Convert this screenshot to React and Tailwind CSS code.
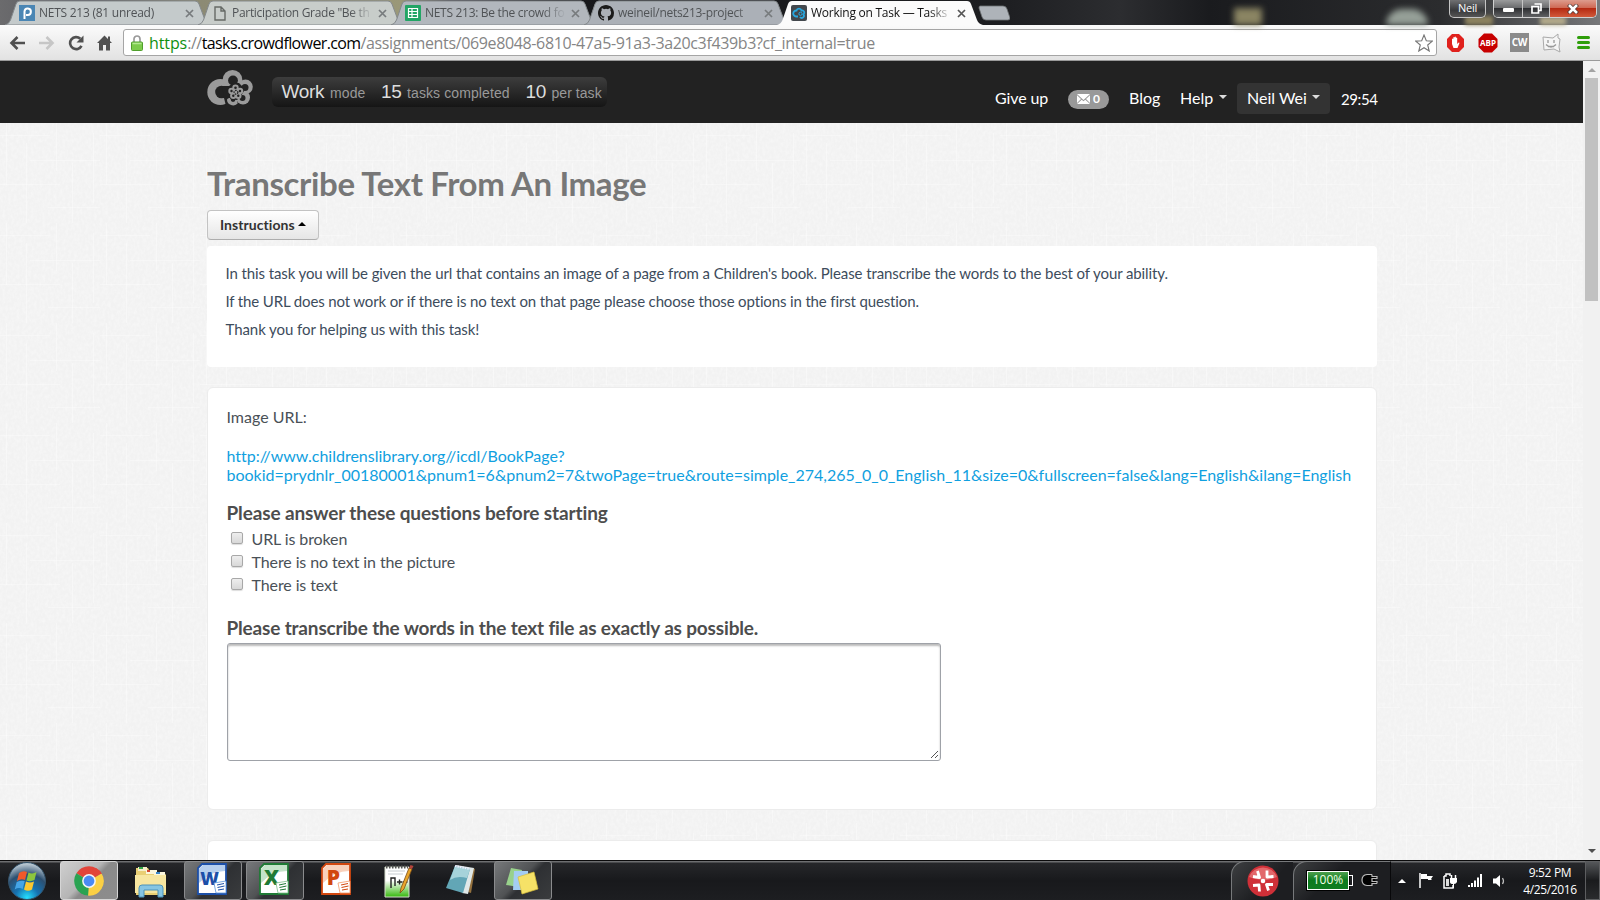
import React from "react";

const ui = "font-['Open_Sans','Noto_Sans',sans-serif]";

function Close({ active }) {
  return (
    <svg width="9" height="9" viewBox="0 0 9 9" className="shrink-0">
      <path d="M1 1l7 7M8 1l-7 7" stroke={active ? "#555" : "#777b7d"} strokeWidth="1.7" />
    </svg>
  );
}

function Tab({ icon, title, fill, active, titleClass }) {
  return (
    <div className="relative h-[25px] w-[193px] shrink-0">
      <svg width="206" height="25" viewBox="0 0 206 25" className="absolute left-0 top-0">
        <path
          d="M0 25 Q4 24 5.5 20 L11 4 Q12 1 15 1 H190 Q193 1 194 4 L200 20 Q201.500 24 206 25Z"
          fill={fill}
          stroke={active ? "none" : "#84898c"}
          strokeWidth="1"
        />
      </svg>
      <div className="relative flex h-[25px] items-center pl-[14px] pt-[1px]">
        <span className="flex w-[16px] shrink-0 justify-center">{icon}</span>
        <span
          className={`ml-[4px] w-[141px] shrink-0 whitespace-nowrap text-[12px] leading-[18px] [mask-image:linear-gradient(to_right,#000_118px,transparent_141px)] ${titleClass} ${active ? "text-[#111]" : "text-[#505356]"}`}
        >
          {title}
        </span>
        <span className="ml-[5px] flex">
          <Close active={active} />
        </span>
      </div>
    </div>
  );
}

const tabIcons = {
  piazza: (
    <svg width="16" height="16" viewBox="0 0 16 16">
      <rect width="16" height="16" fill="#4a86b4" />
      <path d="M5.500 14V6.500A3.200 3.200 0 1 1 8.500 10H7" fill="none" stroke="#fff" strokeWidth="2" />
    </svg>
  ),
  page: (
    <svg width="12" height="15" viewBox="0 0 12 15">
      <path d="M1 1h6l4 4v9H1zM7 1v4h4" fill="none" stroke="#666a66" strokeWidth="1.400" />
    </svg>
  ),
  sheet: (
    <svg width="16" height="16" viewBox="0 0 16 16">
      <rect width="16" height="16" rx="1" fill="#22a565" />
      <path d="M3.500 3.500h9v9h-9zM3.500 6.500h9M3.500 9.500h9M7 3.500v9" fill="none" stroke="#fff" strokeWidth="1.200" />
    </svg>
  ),
  github: (
    <svg width="16" height="16" viewBox="0 0 16 16">
      <path
        fill="#1b1b1b"
        d="M8 0C3.580 0 0 3.580 0 8c0 3.540 2.290 6.530 5.470 7.590.4.070.55-.170.55-.380v-1.490c-2.230.480-2.700-.95-2.700-.95-.36-.92-.89-1.170-.89-1.170-.73-.5.050-.49.050-.49.810.060 1.230.83 1.230.83.720 1.230 1.880.87 2.340.67.070-.52.280-.87.510-1.070-1.780-.2-3.640-.89-3.640-3.950 0-.87.310-1.590.820-2.150-.080-.2-.36-1.020.080-2.120 0 0 .67-.21 2.200.82a7.700 7.700 0 0 1 4 0c1.530-1.040 2.200-.82 2.200-.82.440 1.100.16 1.920.080 2.120.51.560.82 1.270.82 2.150 0 3.070-1.870 3.750-3.650 3.950.29.250.54.730.54 1.480v2.200c0 .21.150.46.550.38A8 8 0 0 0 16 8c0-4.420-3.580-8-8-8z"
      />
    </svg>
  ),
  flower: (
    <svg width="16" height="16" viewBox="0 0 16 16">
      <rect width="16" height="16" rx="2" fill="#43484d" />
      <path d="M7 11.500H5a3 3 0 1 1 .5-6 2.600 2.600 0 0 1 5 0 2.300 2.300 0 0 1 2 4 2 2 0 0 1-3.500 2.500" fill="none" stroke="#28a8e0" strokeWidth="1.800" />
      <circle cx="9.500" cy="8.800" r="1.600" fill="none" stroke="#28a8e0" strokeWidth="1" />
    </svg>
  ),
};

function TabStrip() {
  return (
    <div className="relative flex h-[25px] bg-[linear-gradient(90deg,#6b6b6d_0,#55555c_90px,#8c8a74_200px,#9a9878_400px,#4b4b52_450px,#17181b_560px,#1d1e21_1000px,#2c2d30_1120px,#1a1b1e_1210px,#2b2c2e_1440px,#77787a_1600px)] pl-[5px]">
      <div className="absolute left-[1234px] top-[8px] h-[17px] w-[28px] bg-[#8b8563] blur-[3px]" />
      <div className="absolute left-[1386px] top-[9px] h-[16px] w-[42px] rounded-t-full bg-[#96a098] blur-[3px]" />
      <div className="absolute left-[1465px] top-[16px] h-[9px] w-[28px] bg-[#8d835f] blur-[2px]" />
      <div className="absolute left-[1540px] top-[17px] h-[8px] w-[26px] bg-[#b4ab8b] blur-[2px]" />
      <Tab fill="#c4cacb" icon={tabIcons.piazza} title="NETS 213 (81 unread)" titleClass="tracking-[-0.25px]" />
      <Tab fill="#c8cdca" icon={tabIcons.page} title={'Participation Grade "Be th'} titleClass="tracking-[-0.3px]" />
      <Tab fill="#b2b7bd" icon={tabIcons.sheet} title="NETS 213: Be the crowd fo" titleClass="tracking-[-0.3px]" />
      <Tab fill="#abb0b7" icon={tabIcons.github} title="weineil/nets213-project" titleClass="tracking-[-0.28px]" />
      <Tab fill="#fbfbfb" active icon={tabIcons.flower} title="Working on Task — Tasks" titleClass="tracking-[-0.25px]" />
      <svg width="32" height="16" viewBox="0 0 32 16" className="ml-[8px] mt-[5px] shrink-0">
        <path d="M2 1h23q3 0 4 3l3 9q0 2-2 2H8q-3 0-4-3L1 3q0-2 1-2z" fill="#aeb3b9" stroke="#6d7174" strokeWidth=".8" />
      </svg>
      <div className="flex-1" />
      <div className="relative mr-[3px] flex h-[19px] items-start">
        <div className={`mr-[7px] flex h-[18px] w-[37px] items-center justify-center rounded-b-[5px] border border-t-0 border-[#c5c5c5] bg-[linear-gradient(#6f7072,#38393b_60%,#555)] text-[11px] tracking-[-0.2px] text-white ${ui}`}>Neil</div>
        <div className="flex h-[18px] w-[104px] overflow-hidden rounded-b-[5px] border border-t-0 border-[#d0d0d0]">
          <div className="flex w-[29px] items-center justify-center border-r border-[#c5c5c5] bg-[linear-gradient(#9a9b9c,#6b6c6e_45%,#2d2e31_50%,#606163)]">
            <div className="mt-[3px] h-[4px] w-[11px] rounded-[1px] bg-white" />
          </div>
          <div className="flex w-[27px] items-center justify-center border-r border-[#c5c5c5] bg-[linear-gradient(#9a9b9c,#6b6c6e_45%,#2d2e31_50%,#606163)]">
            <svg width="11" height="11" viewBox="0 0 11 11">
              <path d="M3.500 1h6.500v6.500H8M1 3.500h6.500V10H1z" fill="none" stroke="#fff" strokeWidth="1.700" />
            </svg>
          </div>
          <div className="flex flex-1 items-center justify-center bg-[linear-gradient(#dd9c8d,#cf6a55_45%,#b52a12_50%,#d2593a)]">
            <svg width="12" height="10" viewBox="0 0 12 10">
              <path d="M1.500 .500l9 9M10.500 .500l-9 9" stroke="#4a3230" strokeWidth="4" />
              <path d="M2 1l8 8M10 1l-8 8" stroke="#fff" strokeWidth="2.600" />
            </svg>
          </div>
        </div>
      </div>
    </div>
  );
}

function Toolbar() {
  return (
    <div className="flex h-[36px] items-center border-b border-[#9a9a9a] bg-[linear-gradient(#fbfbfb,#e2e2e2)]">
      <div className="flex w-[123px] items-center gap-[13px] pl-[9px]">
        <svg width="16" height="16" viewBox="0 0 16 16">
          <path d="M8.500 2L2.500 8l6 6M2.500 8H16" fill="none" stroke="#505050" strokeWidth="2.600" />
        </svg>
        <svg width="16" height="16" viewBox="0 0 16 16" className="ml-[1px]">
          <path d="M7.500 2l6 6-6 6M13.500 8H0" fill="none" stroke="#c6c6c6" strokeWidth="2.600" />
        </svg>
        <svg width="16" height="16" viewBox="0 0 16 16">
          <path d="M13.500 10.800A6 6 0 1 1 12.300 3.800" fill="none" stroke="#505050" strokeWidth="2.600" />
          <path d="M15.500 .500v7h-7z" fill="#505050" />
        </svg>
        <svg width="15" height="16" viewBox="0 0 15 16">
          <path d="M7.500 0.500L0 8h2v7.500h4V10h3v5.500h4V8h2l-2-2V1.500h-2V4z" fill="#505050" />
        </svg>
      </div>
      <div className="flex h-[27px] w-[1314px] items-center rounded-[3px] border border-[#a5a5a5] bg-white pl-[7px]">
        <svg width="12" height="16" viewBox="0 0 12 16" className="shrink-0">
          <path d="M3 8V4a3 3 0 0 1 6 0v4" fill="none" stroke="#9a9a9a" strokeWidth="1.700" />
          <rect x=".5" y="7" width="11" height="8.500" rx="1" fill="#7ccb4c" stroke="#4f9f2c" />
          <path d="M1.500 8.500h9" stroke="#b3e890" strokeWidth="1.500" />
        </svg>
        <span className={`ml-[6px] whitespace-nowrap text-[16px] leading-[24px] tracking-[-0.44px] text-[#858585] ${ui}`}>
          <span className="tracking-[-0.1px] text-[#109010]">https</span>://<span className="tracking-[-0.62px] text-black">tasks.crowdflower.com</span><span className="tracking-[-0.36px]">/assignments/069e8048-6810-47a5-91a3-3a20c3f439b3?cf_internal=true</span>
        </span>
        <svg width="18" height="18" viewBox="0 0 18 18" className="ml-auto mr-[3px] shrink-0">
          <path d="M9 1l2.300 5.700 6 .4-4.600 3.900 1.500 6L9 13.700 3.800 17l1.500-6L.7 7.100l6-.4z" fill="#fff" stroke="#747474" strokeWidth="1.100" />
        </svg>
      </div>
      <div className="flex flex-1 items-center pl-[9px]">
        <svg width="19" height="20" viewBox="0 0 19 20">
          <path d="M6 1h7l5 5v8l-5 5H6l-5-5V6z" fill="#e0211d" />
          <path d="M6 11V6q.7-1 1.300 0v3V4.500q.7-1 1.300 0V9V4q.7-1 1.300 0v5V5q.7-1 1.300 0v6l1.500-1.500q1.300 0 .5 1.300L11.500 15h-4z" fill="#fff" />
        </svg>
        <svg width="20" height="20" viewBox="0 0 20 20" className="ml-[13px]">
          <path d="M6 .500h8l5.500 5.500v8L14 19.500H6L.5 14V6z" fill="#c70000" />
          <text x="10" y="13.300" textAnchor="middle" fontFamily="Open Sans" fontSize="8.500" fontWeight="700" fill="#fff" textLength="16" lengthAdjust="spacingAndGlyphs">ABP</text>
        </svg>
        <div className={`ml-[12px] flex h-[19px] w-[19px] items-center justify-center bg-[#8a8a8a] text-[10px] font-bold tracking-[-0.3px] text-white ${ui}`}>CW</div>
        <svg width="19" height="20" viewBox="0 0 19 20" className="ml-[13px]">
          <path d="M1 4l10 1 5-4v4l2 1-1 8 1 5-6-3-10 1z" fill="#f5f5f5" stroke="#a9a9a9" />
          <path d="M6 7v3M12 7v3M4 11.500q5 5 10 0M6 13.500h6" fill="none" stroke="#999" strokeWidth="1.300" />
        </svg>
        <div className="ml-[16px] flex w-[13px] flex-col gap-[2px]">
          <div className="h-[3px] rounded-full bg-[#2f9e0a]" />
          <div className="h-[3px] rounded-full bg-[#2f9e0a]" />
          <div className="h-[3px] rounded-full bg-[#2f9e0a]" />
        </div>
      </div>
    </div>
  );
}

function Logo() {
  return (
    <svg width="48" height="38" viewBox="0 0 48 38" className="shrink-0">
      <g fill="#9b9b9b">
        <circle cx="13.300" cy="23" r="13" />
        <circle cx="25.500" cy="10.800" r="9.800" />
        <circle cx="38.500" cy="17.800" r="7.300" />
        <circle cx="36" cy="28.500" r="7" />
        <circle cx="25.500" cy="29.500" r="5.800" />
      </g>
      <g fill="#222">
        <circle cx="14.500" cy="23" r="6.300" />
        <path d="M15 17h8v16l-4 4-2-8z" />
        <circle cx="26" cy="11.500" r="4.900" />
        <circle cx="38" cy="18.500" r="3.500" />
        <circle cx="35.500" cy="29" r="3" />
        <circle cx="26" cy="30.500" r="2.400" />
        <path d="M17 18l5-1 4-3h6l3 3 2 5-3 5-4 4-7-1-6-3z" />
      </g>
      <g fill="#9b9b9b">
        <path d="M20 30.500q1-2 3-1.500l1 3.500q3 2 5-.5l2 2q-3 4-8 1.500-3-1.500-3-5z" />
        <circle cx="28.500" cy="18.800" r="3.200" />
        <circle cx="33" cy="22" r="3.200" />
        <circle cx="31.300" cy="26.700" r="3.200" />
        <circle cx="26.300" cy="26.700" r="3.200" />
        <circle cx="24.500" cy="22" r="3.200" />
        <circle cx="29" cy="23.500" r="3.500" />
      </g>
      <g fill="#222">
        <circle cx="28.500" cy="18.800" r="1.300" />
        <circle cx="33" cy="22" r="1.200" />
        <circle cx="31.300" cy="26.700" r="1.200" />
        <circle cx="26.300" cy="26.700" r="1.200" />
        <circle cx="24.500" cy="22" r="1.200" />
      </g>
      <circle cx="29" cy="23.300" r="1.900" fill="none" stroke="#222" strokeWidth="1.200" strokeDasharray="1.500 .9" />
    </svg>
  );
}

function Caret() {
  return <span className="mt-[-1px] h-0 w-0 border-x-4 border-t-4 border-x-transparent border-t-[#dcdcdc]" />;
}

function Header() {
  return (
    <div className="flex h-[62px] shrink-0 bg-[#222] pl-[207px]">
      <div className="mt-[8px]">
        <Logo />
      </div>
      <div className="ml-[17px] mt-[16px] flex h-[30px] w-[335px] items-baseline whitespace-nowrap rounded-[6px] bg-[linear-gradient(#3d3d3d,#151515)] pl-[9.500px] pt-[1px] font-['Liberation_Sans',sans-serif] text-[14px] leading-[27px] text-[#999]">
        <span className="w-[48.500px] text-[19px] tracking-[-0.3px] text-[#ddd]">Work</span>
        <span className="w-[51px] tracking-[0.1px]">mode</span>
        <span className="w-[26px] text-[19px] tracking-[-0.2px] text-[#ddd]">15</span>
        <span className="w-[118.500px] tracking-[0.1px]">tasks completed</span>
        <span className="w-[26px] text-[19px] tracking-[-0.2px] text-[#ddd]">10</span>
        <span className="tracking-[0.05px]">per task</span>
      </div>
      <div className="ml-[388px] mt-[22px] flex h-[31px] items-center whitespace-nowrap text-[16px] text-white">
        <span className="-mt-[2px] w-[73px] tracking-[-0.1px]">Give up</span>
        <span className="mr-[20px] mt-[1px] flex h-[19px] w-[41px] items-center justify-center gap-[3px] rounded-full bg-[#999] text-[12px] font-bold">
          <svg width="13" height="10" viewBox="0 0 13 10">
            <path d="M0 0h13L6.500 6zM0 1.200L4 5 0 9zM13 1.200L9 5l4 4zM0 10l4.700-4.300L6.500 7.300l1.800-1.600L13 10z" fill="#fff" />
          </svg>
          0
        </span>
        <span className="-mt-[2px] w-[51px]">Blog</span>
        <span className="-mt-[2px] flex w-[57px] items-center gap-[6px]"><span>Help</span> <Caret /></span>
        <span className="flex h-[31px] w-[93px] items-center gap-[5px] rounded-[4px] bg-[#333] pb-[2px] pl-[10px]">Neil Wei <Caret /></span>
        <span className="ml-[11px] mt-[1px] text-[15px] tracking-[-0.4px]">29:54</span>
      </div>
    </div>
  );
}

function Scrollbar() {
  return (
    <div className="flex w-[17px] shrink-0 flex-col items-center bg-[#f1f1f1]">
      <div className="flex h-[17px] items-center">
        <span className="border-x-4 border-b-4 border-x-transparent border-b-[#a3a3a3]" />
      </div>
      <div className="h-[223px] w-[13px] bg-[#c1c1c1]" />
      <div className="flex-1" />
      <div className="flex h-[19px] items-center">
        <span className="border-x-4 border-t-4 border-x-transparent border-t-[#505050]" />
      </div>
    </div>
  );
}

function Check({ label }) {
  return (
    <label className="flex h-[23px] items-center">
      <span className="mb-[1px] ml-[4px] h-[12px] w-[12px] rounded-[2px] border border-[#a8a8a8] bg-[linear-gradient(#eee,#d8d8d8)] shadow-[0_1px_1px_#ddd]" />
      <span className="ml-[9px] leading-[23px] tracking-[-0.1px]">{label}</span>
    </label>
  );
}

function Linen() {
  return (
    <svg className="absolute inset-0 h-full w-full" aria-hidden="true">
      <defs>
        <filter id="grain" x="0" y="0" width="100%" height="100%">
          <feTurbulence type="fractalNoise" baseFrequency="0.35 0.25" numOctaves="2" seed="4" />
          <feColorMatrix values="0 0 0 0 1  0 0 0 0 1  0 0 0 0 1  1.600 0 0 0 -0.550" />
        </filter>
        <pattern id="threads" width="100" height="100" patternUnits="userSpaceOnUse">
          <path d="M6.500 0V62M26.500 20V100M56.500 0V48M72.500 40V100M93.500 10V80" stroke="#fff" strokeWidth="1" opacity=".35" />
          <path d="M0 12.500H50M30 37.500H100M0 61.500H60M48 84.500H100" stroke="#fff" strokeWidth="1" opacity=".3" />
        </pattern>
      </defs>
      <rect width="100%" height="100%" filter="url(#grain)" opacity="0.4" />
      <rect width="100%" height="100%" fill="url(#threads)" />
    </svg>
  );
}

function Page() {
  return (
    <div className="relative flex-1 overflow-hidden bg-[#f2f2f2] pl-[207px]">
      <Linen />
      <div className="relative flex w-[1170px] flex-col">
        <h1 className="mt-[40px] text-[33px] font-bold leading-[40px] tracking-[-0.37px] text-[#777]">Transcribe Text From An Image</h1>
        <div className="mt-[7px] flex h-[30px] w-[112px] items-center gap-[3px] rounded-[4px] border border-[#c3c3c3] border-b-[#adadad] bg-[linear-gradient(#fff,#e6e6e6)] pb-[2px] pl-[12px] text-[14px] font-bold text-[#333]">
          <span className="tracking-[0.05px]">Instructions</span>
          <span className="border-x-4 border-b-4 border-x-transparent border-b-black" />
        </div>
        <div className="mt-[6px] h-[121px] rounded-[4px] bg-white pl-[18.500px] pt-[13px] text-[15px] leading-[28px] text-[#3d4c5c]">
          <p className="tracking-[-0.105px]">In this task you will be given the url that contains an image of a page from a Children's book. Please transcribe the words to the best of your ability.</p>
          <p className="tracking-[-0.14px]">If the URL does not work or if there is no text on that page please choose those options in the first question.</p>
          <p className="tracking-[-0.07px]">Thank you for helping us with this task!</p>
        </div>
        <div className="mt-[20px] flex h-[423px] flex-col rounded-[6px] border border-[#ececec] bg-white pl-[18.500px] pt-[19px] text-[16px] text-[#4a5157]">
          <div className="leading-[20px]">Image URL:</div>
          <a className="mt-[19px] whitespace-nowrap leading-[19px] text-[#10a0e0] [font-variant-ligatures:none]">
            http://www.childrenslibrary.org//icdl/BookPage?
            <br />
            bookid=prydnlr_00180001&amp;pnum1=6&amp;pnum2=7&amp;twoPage=true&amp;route=simple_274,265_0_0_English_11&amp;size=0&amp;fullscreen=false&amp;lang=English&amp;ilang=English
          </a>
          <div className="mt-[17px] text-[19px] font-bold leading-[24px] tracking-[-0.125px] text-[#4d4d4d]">Please answer these questions before starting</div>
          <div className="mt-[2px]">
            <Check label="URL is broken" />
            <Check label="There is no text in the picture" />
            <Check label="There is text" />
          </div>
          <div className="mt-[20px] text-[19px] font-bold leading-[24px] tracking-[-0.17px] text-[#4d4d4d]">Please transcribe the words in the text file as exactly as possible.</div>
          <div className="mt-[3px] flex h-[118px] w-[714px] items-end justify-end rounded-[3px] border border-[#9fa2a8] bg-white shadow-[inset_0_2px_2px_#bbb]">
            <svg width="10" height="10" viewBox="0 0 10 10">
              <path d="M8 1L1 8M8 5L5 8" stroke="#555" strokeWidth="1" />
            </svg>
          </div>
        </div>
        <div className="mt-[30px] h-[40px] rounded-t-[6px] border border-[#ececec] bg-white" />
      </div>
    </div>
  );
}

function TaskButton({ children, active, open }) {
  const look = active
    ? "border-[#d5d5d5] bg-[linear-gradient(135deg,#cfcfcf,#b5b5b5_45%,#8a8a8a_55%,#8d8d8d)]"
    : open
      ? "border-[#8a8b8d] bg-[linear-gradient(135deg,#77797b,#505254_45%,#2e3033_55%,#3a3c3e)]"
      : "border-transparent";
  return <div className={`flex h-[39px] w-[58px] items-center justify-center rounded-[3px] border ${look}`}>{children}</div>;
}

function OfficeIcon({ color, light, letter, size }) {
  return (
    <svg width="30" height="32" viewBox="0 0 30 32" className="-mt-[3px] -ml-[2px]">
      <path d="M5 1h24v30H1V5z" fill="#fff" stroke={color} strokeWidth="1.800" />
      <path d="M2 20V6l4-4h22v6Q14 8 2 20z" fill={light} opacity=".45" />
      <text x="12.500" y="22" textAnchor="middle" fontFamily="Open Sans" fontWeight="800" fontSize={size} fill={color}>{letter}</text>
      <path d="M17 20l12-2v12H19z" fill="#fff" stroke={light} strokeWidth=".8" />
      <path d="M20 22l7-1.500M20.500 24.500l7-1.500M21 27l6-1" stroke={color} strokeWidth="1" />
    </svg>
  );
}

function Taskbar() {
  return (
    <div className={`flex h-[40px] shrink-0 border-t border-[#0b0b0c] bg-[linear-gradient(#6d6e70_0,#6d6e70_1px,#26272a_2px,#18191c_50%,#1d1e21)] ${ui}`}>
      <svg width="40" height="39" viewBox="0 0 40 39" className="ml-[7px] mr-[13px] shrink-0">
        <defs>
          <radialGradient id="orb" cx=".5" cy=".95" r=".9">
            <stop offset="0" stopColor="#25e0ff" />
            <stop offset=".35" stopColor="#1673b2" />
            <stop offset=".7" stopColor="#2c4f70" />
            <stop offset="1" stopColor="#b5c4cf" />
          </radialGradient>
        </defs>
        <circle cx="20" cy="20" r="18.500" fill="url(#orb)" stroke="#33536b" />
        <path d="M12 12q4-3 8-1l-2 8q-4-2-8 1z" fill="#f0592a" />
        <path d="M21.500 11.500q4 2 8-.5l-2 8q-4 2-8 .5z" fill="#8cc63e" />
        <path d="M9.700 21q4-2 8-1l-2 8q-4-2-8 .5z" fill="#45a5e6" />
        <path d="M19 20.500q4 2 8 0l-2 8q-4 2.500-8 0z" fill="#fdc82f" />
      </svg>
      <div className="flex gap-[4px]">
        <TaskButton active>
          <svg width="30" height="30" viewBox="0 0 30 30">
            <path d="M15 15L2.400 7.300A14.600 14.600 0 0 1 27.600 7.500z" fill="#e2453a" />
            <path d="M15 15L27.600 7.500A14.600 14.600 0 0 1 14 29.600z" fill="#fbd044" />
            <path d="M15 15L14 29.600A14.600 14.600 0 0 1 2.400 7.300z" fill="#2aa352" />
            <path d="M15 8h12.800q-2-4-6-6l-7 3z" fill="#e2453a" />
            <circle cx="15" cy="15" r="6.900" fill="#f6f6f6" />
            <circle cx="15" cy="15" r="5.400" fill="#4a8af4" />
          </svg>
        </TaskButton>
        <TaskButton>
          <svg width="34" height="34" viewBox="0 0 34 34">
            <path d="M2 4h12l2 4h14l2 3v20H2z" fill="#e9cf74" />
            <path d="M4 3h9v4H4z" fill="#f5eecb" /><path d="M5 3h4v2H5z" fill="#35a84a" />
            <path d="M12 6h11v4H12z" fill="#fbf6dc" /><path d="M13 6h3v2h-3z" fill="#d34b30" />
            <path d="M20 8h11v4H20z" fill="#fbf6dc" /><path d="M22 8h4v2h-4z" fill="#3b86c8" />
            <path d="M1 11h31v18H1z" fill="#f7e6a0" />
            <path d="M5 33V24q0-3 3-3h18q3 0 3 3v9h-5v-7H10v7z" fill="#86c5e3" stroke="#4d93ba" />
          </svg>
        </TaskButton>
        <TaskButton open><OfficeIcon color="#1c4fa8" light="#5c93d8" letter="W" size="18" /></TaskButton>
        <TaskButton open><OfficeIcon color="#1f7a35" light="#7cc088" letter="X" size="21" /></TaskButton>
        <TaskButton><OfficeIcon color="#d2470f" light="#f2996a" letter="P" size="21" /></TaskButton>
        <TaskButton>
          <svg width="32" height="34" viewBox="0 0 32 34" className="-ml-[3px]">
            <defs><linearGradient id="npp" x2="0" y2="1"><stop offset=".45" stopColor="#fff" /><stop offset="1" stopColor="#35b80c" /></linearGradient></defs>
            <path d="M3 3h24v30H3z" fill="url(#npp)" stroke="#d5dccc" />
            <path d="M4 3h22" stroke="#555" strokeWidth="3" strokeDasharray="1.500 1.500" />
            <path d="M6 7h17M6 10h15" stroke="#c7ccd0" />
            <path d="M9 24V14h4v8M15 18h5M17.500 15.500v5M20.500 18h5M23 15.500v5" fill="none" stroke="#222" strokeWidth="1.400" />
            <path d="M27 4l3 1-8 20-4 4 1-5z" fill="#e9a52a" stroke="#7c4c16" strokeWidth=".8" />
            <path d="M27 4l1.500-3 3 1L30 5z" fill="#b5443c" />
          </svg>
        </TaskButton>
        <TaskButton>
          <svg width="32" height="32" viewBox="0 0 32 32" className="-mt-[3px] -ml-[1px]">
            <path d="M28 5l2 1-4 24-3-1z" fill="#94713e" />
            <path d="M11 2l18 3-6 26-6-1z" fill="#dfe8e8" />
            <path d="M10 3l15 3-7 24L1 25z" fill="#62a6b6" />
            <path d="M10 3l15 3-3 9Q12 12 5 17z" fill="#a6d3da" />
            <path d="M10 3l15 3" stroke="#eef" strokeWidth="2" strokeDasharray="1.500 1" />
          </svg>
        </TaskButton>
        <TaskButton open>
          <svg width="34" height="30" viewBox="0 0 34 30" className="-ml-[2px]">
            <path d="M6 2l11 2-3 17L1 19z" fill="#98d18b" />
            <path d="M9 5h14v19H8z" fill="#a4cdf2" />
            <path d="M13 11l16-5 4 17-16 5z" fill="#f6e267" stroke="#d9bf3b" strokeWidth=".7" />
          </svg>
        </TaskButton>
      </div>
      <div className="flex-1" />
      <div className="flex w-[62px] items-center justify-center rounded-tl-[14px] border-l border-t border-[#77797b] bg-[linear-gradient(135deg,#3d3f41,#1d1e21_60%)]">
        <svg width="32" height="32" viewBox="0 0 32 32">
          <circle cx="16" cy="16" r="15.500" fill="#cf3038" />
          <path d="M2 12a15 15 0 0 1 28 0Q16 18 2 12z" fill="#ee8e8e" opacity=".6" />
          <g stroke="#fff" strokeWidth="2.800" fill="none" strokeLinejoin="round">
            <path d="M10.500 6l2 6.500-6.500-1M20 5.500v6.500l6.500-.5M12.500 26.500l-.5-6.500-6 .5M21.500 25.500l-2-6 6.500 0" />
          </g>
          <circle cx="16" cy="16" r="2.300" fill="#fff" />
        </svg>
      </div>
      <div className="flex w-[98px] items-center rounded-tl-[14px] border-l border-r border-t border-[#77797b] border-r-[#08080a] bg-[linear-gradient(135deg,#3d3f41,#1d1e21_40%)] pb-[2px] pl-[13px]">
        <div className="flex h-[19px] w-[42px] items-center justify-center border border-white bg-[linear-gradient(#4ea04d,#0a7a1c_50%,#107d22)] text-[12px] text-[#f3ffe8] outline outline-1 outline-black">100%</div>
        <div className="h-[11px] w-[4px] border border-l-0 border-white" />
        <svg width="17" height="14" viewBox="0 0 17 14" className="ml-[8px]">
          <path d="M11 1.500H6Q1 2 1 7t5 5.500h5v-2h5M11 1.500v2h5v2h-5v3h5v2" fill="#000" stroke="#bbb" strokeWidth="1.200" />
        </svg>
      </div>
      <div className="flex w-[194px] items-center">
        <span className="ml-[7px] border-x-4 border-b-4 border-x-transparent border-b-white" />
        <svg width="16" height="16" viewBox="0 0 16 16" className="ml-[12px]">
          <path d="M2 0v15" stroke="#fff" strokeWidth="1.500" />
          <path d="M3 1h6v2h6l-2 3 1 1h-4V6H3z" fill="#fff" />
        </svg>
        <svg width="16" height="16" viewBox="0 0 16 16" className="ml-[8px]">
          <path d="M2 3h2V1h4v2M2 3v12h9v-3" fill="none" stroke="#fff" strokeWidth="1.500" />
          <path d="M8 5h7v4q-1 2-3 2v4h-1v-4q-3 0-3-2z" fill="#fff" />
          <path d="M9.500 2v4M13.500 2v4" stroke="#fff" strokeWidth="1.500" />
          <path d="M4 6h3v7H4z" fill="#ddd" />
        </svg>
        <svg width="15" height="13" viewBox="0 0 15 13" className="ml-[9px]">
          <path d="M1 11h2v2H1zM4 9h2v4H4zM7 6.500h2V13H7zM10 3.500h2V13h-2zM13 0h2v13h-2z" fill="#fff" />
        </svg>
        <svg width="14" height="14" viewBox="0 0 14 14" className="ml-[11px]">
          <path d="M0 4.500h3L7 1v12L3 9.500H0z" fill="#fff" />
          <path d="M9.500 4q2 3 0 6" fill="none" stroke="#bbb" strokeWidth="1.300" />
        </svg>
        <div className="ml-[10px] w-[66px] text-center text-[12px] leading-[17px] tracking-[-0.35px] text-white">
          <div>9:52 PM</div>
          <div>4/25/2016</div>
        </div>
      </div>
      <div className="w-[15px] border border-[#5d5e60] bg-[linear-gradient(#55575a,#1a1b1d_50%,#2a2b2d)]" />
    </div>
  );
}

export default function App() {
  return (
    <div className="flex h-[900px] w-[1600px] flex-col overflow-hidden bg-[#222]">
      <div className={`shrink-0 ${ui}`}>
        <TabStrip />
        <Toolbar />
      </div>
      <div className="flex min-h-0 flex-1 font-[Lato,sans-serif]">
        <div className="flex min-w-0 flex-1 flex-col">
          <Header />
          <Page />
        </div>
        <Scrollbar />
      </div>
      <Taskbar />
    </div>
  );
}
